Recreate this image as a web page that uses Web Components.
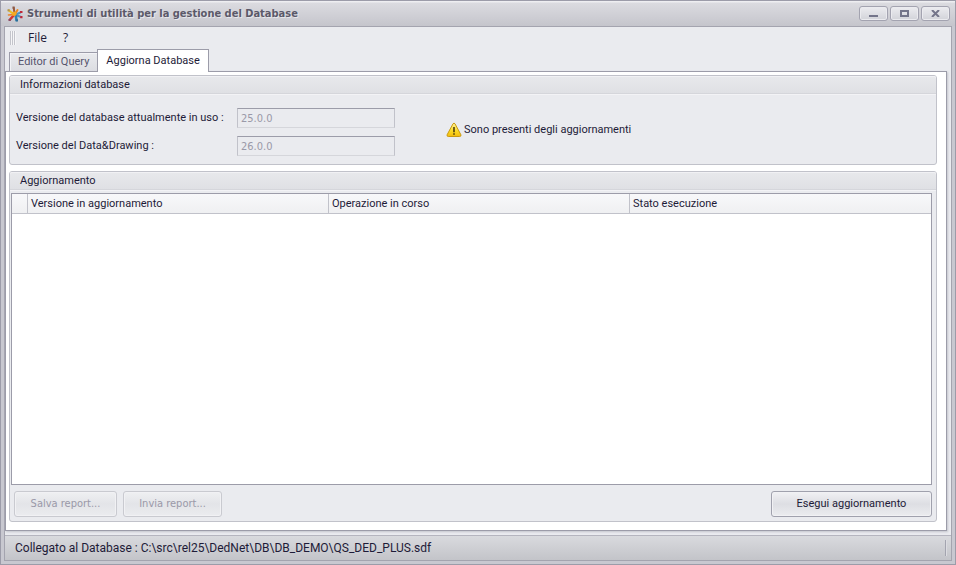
<!DOCTYPE html>
<html lang="it">
<head>
<meta charset="utf-8">
<title>Strumenti di utilità per la gestione del Database</title>
<style>
  html, body {
    margin: 0;
    height: 100%;
  }
  body {
    --line: #9c9ca9;
    --soft-line: #c1c2ca;
    --face: #eaebef;
    --ink: #1e1b38;
    --muted: #9a99a8;
    --title-font: "DejaVu Sans Condensed", "DejaVu Sans", sans-serif;
    font: 11px/18px Roboto, "Noto Sans", sans-serif;
    color: var(--ink);
  }
</style>
</head>
<body>

<app-window caption="Strumenti di utilità per la gestione del Database">
  <menu-bar slot="menu" items="File,?"></menu-bar>
  <tab-pages tabs="Editor di Query,Aggiorna Database" selected="1">
    <group-box caption="Informazioni database">
      <version-info>
        <version-field label="Versione del database attualmente in uso :" value="25.0.0"></version-field>
        <version-field label="Versione del Data&amp;Drawing :" value="26.0.0"></version-field>
        <warning-note slot="note">Sono presenti degli aggiornamenti</warning-note>
      </version-info>
    </group-box>
    <group-box caption="Aggiornamento" fill>
      <update-grid columns="Versione in aggiornamento,Operazione in corso,Stato esecuzione"></update-grid>
      <button-row>
        <push-button size="report" disabled>Salva report...</push-button>
        <push-button size="send" disabled>Invia report...</push-button>
        <push-button slot="end" size="main">Esegui aggiornamento</push-button>
      </button-row>
    </group-box>
  </tab-pages>
  <status-bar slot="status">Collegato al Database : C:\src\rel25\DedNet\DB\DB_DEMO\QS_DED_PLUS.sdf</status-bar>
</app-window>

<script>
// outer frame with the title bar and the three window buttons
class AppWindow extends HTMLElement {
  connectedCallback() {
    const shadow = this.attachShadow({ mode: "open" });
    shadow.innerHTML = `
    <style>
      :host {
        display: flex;
        flex-direction: column;
        box-sizing: border-box;
        min-height: 100vh;
        padding: 0 3px 3px;
        border: 1px solid var(--line);
        background: #c8c8d0;
      }
      header {
        display: flex;
        align-items: center;
        gap: 4px;
        height: 25px;
        margin: 0 -3px;
        padding: 0 5px 0 6px;
        background: linear-gradient(#eeeef1 1px, #dbdbe0 2px, #c5c5cc);
      }
      header svg { flex: none; }
      h1 {
        flex: 1;
        margin: 0;
        font: bold 11px/16px var(--title-font);
        color: #5b5969;
        text-shadow: 1px 1px 0 #e6e6eb;
      }
      .controls { display: flex; gap: 2px; }
      .controls button {
        display: flex;
        align-items: center;
        justify-content: center;
        box-sizing: border-box;
        width: 29px;
        height: 15px;
        padding: 0;
        border: 1px solid #a3a3b0;
        border-radius: 3px;
        background: linear-gradient(#ececf0, #d2d3d9);
        box-shadow: inset 0 0 0 1px #ebebef;
      }
      main {
        flex: 1;
        display: flex;
        flex-direction: column;
        border: 1px solid #a4a4af;
        background: var(--face);
      }
    </style>
    <header>
      <svg width="16" height="16" viewBox="0 0 16 16" aria-hidden="true" fill="none" stroke-linecap="round">
        <path d="M7.500 8L6.800 2" stroke="#9c5a3c" stroke-width="2"/>
        <path d="M8 8l2.500-4" stroke="#f08a1c" stroke-width="2"/>
        <path d="M9 8.500l4.500-2" stroke="#4d93c4" stroke-width="2"/>
        <path d="M9 9l5 2" stroke="#4d93c4" stroke-width="2"/>
        <path d="M8.500 8l1 6" stroke="#2e83b4" stroke-width="2.600"/>
        <path d="M7 9l-4 4.500" stroke="#d8372f" stroke-width="2.600"/>
        <path d="M7 8.500L1.500 9" stroke="#e8842b" stroke-width="1.600"/>
        <path d="M6.500 8L2 4.500" stroke="#edbf25" stroke-width="2.200"/>
        <path d="M5.500 6l3-.5L10 8l-2 2-3-.5z" fill="#f5a823"/>
        <path d="M5.500 .500h2.200v2.200H5.500z" fill="#8d5a45"/>
        <path d="M13 5h2.500v2H13zM13.200 10h2.300v2.300h-2.300z" fill="#c0283a"/>
        <path d="M8.600 13.300h2.400v2.200H8.600z" fill="#286f9b"/>
        <path d="M1.500 13h2.300v2H1.500z" fill="#8b4a65"/>
        <path d="M.500 3.300h2.200v2H.500z" fill="#b09451"/>
      </svg>
      <h1></h1>
      <div class="controls">
        <button aria-label="Riduci a icona"><svg width="9" height="7"><path d="M0 5h9v2H0z" fill="#74758a"/></svg></button>
        <button aria-label="Ingrandisci"><svg width="9" height="7"><path d="M1 1h7v5H1z" fill="none" stroke="#74758a" stroke-width="2"/></svg></button>
        <button aria-label="Chiudi"><svg width="9" height="7"><path d="M1 0l7 7M8 0L1 7" stroke="#74758a" stroke-width="2"/></svg></button>
      </div>
    </header>
    <main>
      <slot name="menu"></slot>
      <slot></slot>
      <slot name="status"></slot>
    </main>`;
    shadow.querySelector("h1").textContent = this.getAttribute("caption");
  }
}
customElements.define("app-window", AppWindow);

// menu strip with the drag grip on its left
class MenuBar extends HTMLElement {
  connectedCallback() {
    const shadow = this.attachShadow({ mode: "open" });
    const items = this.getAttribute("items").split(",");
    shadow.innerHTML = `
    <style>
      :host { display: block; font: 12px/16px "Open Sans", "Noto Sans", sans-serif; }
      nav { display: flex; align-items: center; height: 22px; padding-left: 5px; }
      i {
        width: 6px;
        height: 14px;
        margin-right: 4px;
        background: repeating-linear-gradient(90deg, #c3c4cb 0 1px, #f6f6f8 1px 2px);
      }
      button {
        padding: 0 8px;
        border: 0;
        background: none;
        color: inherit;
        font: inherit;
      }
    </style>
    <nav><i></i>${items.map((t) => `<button>${t}</button>`).join("")}</nav>`;
  }
}
customElements.define("menu-bar", MenuBar);

class TabPages extends HTMLElement {
  connectedCallback() {
    const shadow = this.attachShadow({ mode: "open" });
    const selected = Number(this.getAttribute("selected"));
    const tabs = this.getAttribute("tabs").split(",").map((t, i) =>
      `<button role="tab" aria-selected="${i === selected}">${t}</button>`);
    shadow.innerHTML = `
    <style>
      :host { flex: 1; display: flex; flex-direction: column; margin: 0 4px 4px 0; }
      .tabs { display: flex; align-items: flex-end; padding-left: 4px; }
      button {
        height: 19px;
        padding: 0 8px;
        border: 1px solid var(--line);
        border-width: 1px 0 0 1px;
        background: linear-gradient(#e9eaed, #dcdde2);
        box-shadow: inset 1px 1px 0 #f3f3f6;
        font: inherit;
        color: #55536c;
      }
      button[aria-selected="true"] {
        z-index: 1;
        height: 23px;
        margin-bottom: -1px;
        border-width: 1px 1px 0;
        background: #fff;
        box-shadow: none;
        color: var(--ink);
      }
      .page {
        flex: 1;
        display: flex;
        flex-direction: column;
        gap: 6px;
        padding: 3px 9px 8px 3px;
        border: 1px solid var(--line);
        background: #fff;
        box-shadow: 1px 1px 2px #c4c5cc;
      }
    </style>
    <div class="tabs" role="tablist">${tabs.join("")}</div>
    <div class="page" role="tabpanel"><slot></slot></div>`;
  }
}
customElements.define("tab-pages", TabPages);

class GroupBox extends HTMLElement {
  connectedCallback() {
    const shadow = this.attachShadow({ mode: "open" });
    shadow.innerHTML = `
    <style>
      :host {
        display: flex;
        flex-direction: column;
        border: 1px solid var(--soft-line);
        border-radius: 3px;
        background: var(--face);
      }
      :host([fill]) { flex: 1; }
      h2 {
        margin: 0;
        padding: 0 10px;
        border-radius: 2px 2px 0 0;
        background: linear-gradient(#e8e9ec, #dfe0e4 17px, #d5d6db 17px);
        box-shadow: inset 0 1px 0 #f1f1f4, 0 1px 0 #f3f3f6;
        font: inherit;
      }
    </style>
    <h2></h2>
    <slot></slot>`;
    shadow.querySelector("h2").textContent = this.getAttribute("caption");
  }
}
customElements.define("group-box", GroupBox);

// column of version fields, with a note beside it
class VersionInfo extends HTMLElement {
  connectedCallback() {
    const shadow = this.attachShadow({ mode: "open" });
    shadow.innerHTML = `
    <style>
      :host { display: flex; align-items: center; gap: 51px; padding: 14px 6px 8px; }
      .fields { display: flex; flex-direction: column; gap: 8px; }
    </style>
    <div class="fields"><slot></slot></div>
    <slot name="note"></slot>`;
  }
}
customElements.define("version-info", VersionInfo);

class VersionField extends HTMLElement {
  connectedCallback() {
    const shadow = this.attachShadow({ mode: "open" });
    shadow.innerHTML = `
    <style>
      :host { display: grid; grid-template-columns: 221px 158px; align-items: center; }
      label { line-height: 20px; white-space: nowrap; }
      input {
        box-sizing: border-box;
        width: 100%;
        height: 20px;
        padding: 0 3px;
        border: 1px solid;
        border-color: var(--line) var(--soft-line) #d5d6db;
        background: var(--face);
        color: var(--muted);
        font: 11px/18px var(--title-font);
      }
    </style>
    <label for="version"></label>
    <input id="version" type="text" disabled>`;
    shadow.querySelector("label").textContent = this.getAttribute("label");
    shadow.querySelector("input").value = this.getAttribute("value");
  }
}
customElements.define("version-field", VersionField);

class WarningNote extends HTMLElement {
  connectedCallback() {
    const shadow = this.attachShadow({ mode: "open" });
    shadow.innerHTML = `
    <style>
      :host { display: flex; align-items: center; gap: 2px; padding-bottom: 4px; }
      svg { flex: none; }
    </style>
    <svg width="16" height="16" viewBox="0 0 16 16" aria-hidden="true">
      <defs>
        <linearGradient id="amber" x2="0" y2="1">
          <stop offset="0" stop-color="#fff3a0"/>
          <stop offset=".6" stop-color="#fbd923"/>
          <stop offset="1" stop-color="#f4bb0e"/>
        </linearGradient>
      </defs>
      <path d="M7 1.800q1-1.400 2 0l5.900 11q.5 1.700-1.200 1.700H2.300Q.6 14.500 1.100 12.800z" fill="url(#amber)" stroke="#c9990f"/>
      <path d="M7.200 5h1.600v5.300H7.200zM7.200 11.300h1.600v1.500H7.200z" fill="#4b3c10"/>
    </svg>
    <span><slot></slot></span>`;
  }
}
customElements.define("warning-note", WarningNote);

class UpdateGrid extends HTMLElement {
  connectedCallback() {
    const shadow = this.attachShadow({ mode: "open" });
    const columns = this.getAttribute("columns").split(",");
    shadow.innerHTML = `
    <style>
      :host {
        flex: 1;
        display: block;
        margin: 3px 4px 0 1px;
        border: 1px solid var(--line);
        background: #fff;
      }
      table { width: 100%; table-layout: fixed; border-collapse: separate; border-spacing: 0; }
      td, th {
        height: 19px;
        padding: 0 3px;
        border-right: 1px solid var(--soft-line);
        border-bottom: 1px solid var(--soft-line);
        background: linear-gradient(#f8f8fa, #eff0f2);
        font-weight: normal;
        text-align: left;
      }
      th:last-child { border-right: 0; }
      td { width: 9px; }
    </style>
    <table>
      <thead><tr><td></td>${columns.map((c) => `<th scope="col">${c}</th>`).join("")}</tr></thead>
      <tbody></tbody>
    </table>`;
  }
}
customElements.define("update-grid", UpdateGrid);

class ButtonRow extends HTMLElement {
  connectedCallback() {
    const shadow = this.attachShadow({ mode: "open" });
    shadow.innerHTML = `
    <style>
      :host { display: flex; gap: 6px; padding: 6px 4px 4px; }
      .end { margin-left: auto; }
    </style>
    <slot></slot>
    <div class="end"><slot name="end"></slot></div>`;
  }
}
customElements.define("button-row", ButtonRow);

class PushButton extends HTMLElement {
  connectedCallback() {
    const shadow = this.attachShadow({ mode: "open" });
    shadow.innerHTML = `
    <style>
      :host { display: block; width: 103px; }
      :host([size="send"]) { width: 99px; }
      :host([size="main"]) { width: 161px; }
      button {
        box-sizing: border-box;
        width: 100%;
        height: 26px;
        padding: 0;
        border: 1px solid #a0a1ad;
        border-radius: 3px;
        background: linear-gradient(#f1f1f4, #dddee3 50%, #ebecef);
        box-shadow: inset 0 0 0 1px #f1f1f4;
        color: inherit;
        font: inherit;
        white-space: nowrap;
      }
      button:disabled {
        border-color: #c9cad0;
        background: linear-gradient(#eff0f2, #e3e4e8 50%, #ebecef);
        color: var(--muted);
        font-family: var(--title-font);
      }
    </style>
    <button><slot></slot></button>`;
    shadow.querySelector("button").disabled = this.hasAttribute("disabled");
  }
}
customElements.define("push-button", PushButton);

class StatusBar extends HTMLElement {
  connectedCallback() {
    const shadow = this.attachShadow({ mode: "open" });
    shadow.innerHTML = `
    <style>
      :host {
        display: flex;
        align-items: center;
        justify-content: space-between;
        height: 24px;
        padding: 0 5px 0 10px;
        border-top: 1px solid #b5b5bf;
        background: linear-gradient(#d9dade, #c3c4c9);
        font-size: 12px;
      }
      i { width: 1px; height: 16px; background: #a3a4af; box-shadow: 1px 0 0 #dcdce1; }
    </style>
    <span><slot></slot></span><i></i>`;
  }
}
customElements.define("status-bar", StatusBar);
</script>
</body>
</html>
